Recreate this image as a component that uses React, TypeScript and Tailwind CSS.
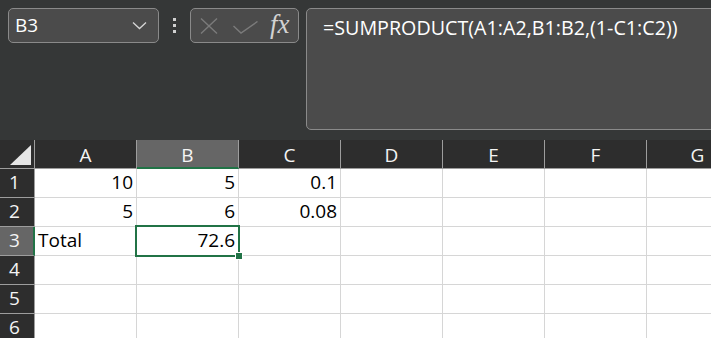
import { ReactElement } from "react";

const cols = ["A", "B", "C", "D", "E", "F", "G"];

const data: Record<number, Record<string, string>> = {
  1: { A: "10", B: "5", C: "0.1" },
  2: { A: "5", B: "6", C: "0.08" },
  3: { A: "Total", B: "72.6" },
};

const Toolbar = (): ReactElement => {
  return (
    <div className="h-[140px] bg-[#353737] flex items-start pt-[8px] pl-[8px] overflow-hidden">
      {/* name box */}
      <div className="w-[151px] h-[35px] shrink-0 rounded-[5px] border border-[#8a8a8a] bg-[#4b4b4b] flex items-center justify-between pl-[6px] pr-[11px]">
        <span className="text-[19px] text-white leading-none">B3</span>
        <svg width="15" height="9" viewBox="0 0 15 9" fill="none">
          <path d="M1 1.5 L7.5 7.5 L14 1.5" stroke="#d6d6d6" strokeWidth="1.3" />
        </svg>
      </div>
      {/* drag dots */}
      <div className="w-[31px] h-[35px] shrink-0 flex flex-col items-center justify-center gap-[3px]">
        <div className="w-[3px] h-[3px] bg-[#d0d0d0]" />
        <div className="w-[3px] h-[3px] bg-[#d0d0d0]" />
        <div className="w-[3px] h-[3px] bg-[#d0d0d0]" />
      </div>
      {/* cancel / enter / fx */}
      <div className="w-[109px] h-[35px] shrink-0 rounded-[5px] border border-[#8a8a8a] bg-[#4b4b4b] flex items-center pl-[9px]">
        <svg width="18" height="16" viewBox="0 0 18 16" fill="none">
          <path d="M1 0.5 L17 15.5 M17 0.5 L1 15.5" stroke="#7b7b7b" strokeWidth="1.4" />
        </svg>
        <svg width="25" height="13" viewBox="0 0 25 13" fill="none" className="ml-[15px] mt-[3px]">
          <path d="M0.5 5 L8 12 L24.5 0.5" stroke="#7b7b7b" strokeWidth="1.4" />
        </svg>
        <span className="ml-[12px] text-[27px] italic text-[#d2d2d2] leading-none font-['Liberation_Serif',serif] -mt-[3px]">
          fx
        </span>
      </div>
      {/* formula bar */}
      <div className="ml-[7px] h-[122px] grow -mr-[12px] rounded-[5px] border border-[#8a8a8a] bg-[#4b4b4b] pl-[16px] pt-[8px]">
        <span className="text-[19.7px] text-white leading-none whitespace-nowrap">
          =SUMPRODUCT(A1:A2,B1:B2,(1-C1:C2))
        </span>
      </div>
    </div>
  );
};

const Grid = (): ReactElement => {
  return (
    <div className="relative">
      {/* column headers */}
      <div className="flex h-[29px] bg-[#2d2d2d]">
        <div className="w-[35px] shrink-0 border-r border-b border-[#9d9d9d] relative">
          <svg width="22" height="20" viewBox="0 0 22 20" className="absolute left-[10px] top-[5px]">
            <path d="M21 0 L21 20 L0 20 Z" fill="#e6e6e6" />
          </svg>
        </div>
        {cols.map((c) => (
          <div
            key={c}
            className={
              c === "B"
                ? "w-[102px] shrink-0 border-r border-b-2 border-r-[#9d9d9d] border-b-[#217346] bg-[#666666] flex items-center justify-center text-[19px] text-[#f4f4f4] pt-[3px]"
                : "w-[102px] shrink-0 border-r border-b border-[#9d9d9d] flex items-center justify-center text-[19px] text-[#f4f4f4] pt-[3px]"
            }
          >
            {c}
          </div>
        ))}
      </div>
      {/* rows */}
      {[1, 2, 3, 4, 5, 6].map((r) => (
        <div key={r} className="flex h-[29px]">
          <div
            className={
              r === 3
                ? "w-[35px] shrink-0 border-r-2 border-b border-r-[#217346] border-b-[#9d9d9d] bg-[#666666] text-[19px] text-[#f4f4f4] pl-[9px] flex items-end pb-[1px]"
                : "w-[35px] shrink-0 border-r border-b border-[#9d9d9d] bg-[#2d2d2d] text-[19px] text-[#f4f4f4] pl-[9px] flex items-end pb-[1px]"
            }
          >
            {r}
          </div>
          {cols.map((c) => {
            const v = data[r]?.[c];
            const isText = v !== undefined && isNaN(Number(v));
            return (
              <div
                key={c}
                className={
                  isText
                    ? "w-[102px] shrink-0 bg-white border-r border-b border-[#d6d6d6] flex items-end justify-start pl-[3px] pb-[1px] text-[19px] text-black"
                    : "w-[102px] shrink-0 bg-white border-r border-b border-[#d6d6d6] flex items-end justify-end pr-[3px] pb-[1px] text-[19px] text-black"
                }
              >
                {v}
              </div>
            );
          })}
        </div>
      ))}
      {/* active cell B3 */}
      <div className="absolute left-[135px] top-[85px] w-[105px] h-[32px] border-2 border-[#217346]">
        <div className="absolute -right-[5px] -bottom-[5px] w-[8px] h-[8px] bg-[#217346] border border-white" />
      </div>
    </div>
  );
};

const App = (): ReactElement => {
  return (
    <div className="w-[711px] h-[338px] overflow-hidden bg-white font-['Open_Sans',sans-serif]">
      <Toolbar />
      <Grid />
    </div>
  );
};

export default App;
